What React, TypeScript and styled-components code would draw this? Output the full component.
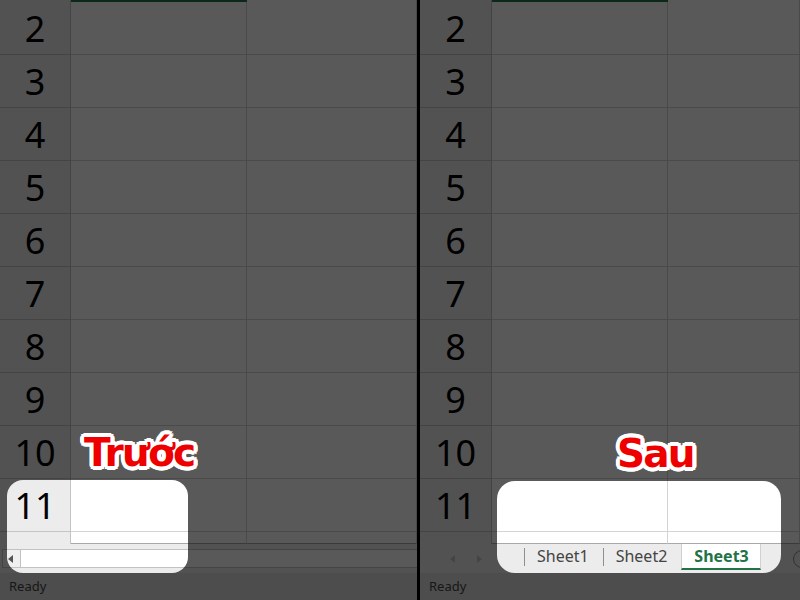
import React from 'react';
import styled, { createGlobalStyle } from 'styled-components';

const GlobalStyle = createGlobalStyle`
  html, body {
    margin: 0;
    padding: 0;
    background: #000;
  }
  body {
    font-family: "Noto Sans", "Open Sans", sans-serif;
  }
`;

const outline = (r: number) => {
  const parts: string[] = [];
  for (let a = 0; a < 360; a += 20) {
    const x = (Math.cos((a * Math.PI) / 180) * r).toFixed(2);
    const y = (Math.sin((a * Math.PI) / 180) * r).toFixed(2);
    parts.push(`${x}px ${y}px 0 #fff`);
  }
  return parts.join(', ');
};

const LABEL_SHADOW = `${outline(2)}, ${outline(4)}`;

const Screen = styled.div`
  display: flex;
  width: 800px;
  height: 600px;
  overflow: hidden;
  background: #000;
`;

const Panel = styled.div<{ $width: number }>`
  position: relative;
  flex: none;
  width: ${(p) => p.$width}px;
  display: flex;
  flex-direction: column;
  overflow: hidden;
  background: #fff;
`;

const Divider = styled.div`
  flex: none;
  width: 3px;
  background: #000;
`;

const Grid = styled.div`
  flex: none;
  height: 544px;
  display: flex;
  flex-direction: column;
  overflow: hidden;
`;

const Row = styled.div<{ $h: number }>`
  display: flex;
  flex: none;
  height: ${(p) => p.$h}px;
`;

const RowHead = styled.div<{ $w: number; $line?: boolean }>`
  flex: none;
  box-sizing: border-box;
  width: ${(p) => p.$w}px;
  background: #ececec;
  border-right: 1px solid #c4c4c4;
  border-bottom: ${(p) => (p.$line ? '1px solid #c4c4c4' : 'none')};
  color: #000;
  font-size: 36px;
  line-height: 52px;
  padding-top: 1px;
  text-align: center;
`;

const Cell = styled.div<{ $w?: number; $bottom?: string; $fill?: string }>`
  position: relative;
  box-sizing: border-box;
  flex: ${(p) => (p.$w ? 'none' : '1')};
  width: ${(p) => (p.$w ? `${p.$w}px` : 'auto')};
  background: ${(p) => p.$fill || '#fff'};
  border-right: 1px solid #d4d4d4;
  border-bottom: ${(p) => (p.$bottom ? `1px solid ${p.$bottom}` : 'none')};
`;

const FillHandle = styled.div`
  position: absolute;
  right: -3px;
  top: 0;
  width: 5px;
  height: 4px;
  background: #217346;
`;

const BottomBar = styled.div`
  flex: none;
  height: 29px;
  display: flex;
  align-items: center;
  background: #ececec;
`;

const Scrollbar = styled.div`
  flex: 1;
  display: flex;
  height: 19px;
  margin-left: 2px;
  box-sizing: border-box;
  border: 1px solid #c2c2c2;
  border-right: none;
  background: #fff;
`;

const ScrollArrow = styled.div`
  flex: none;
  width: 18px;
  display: flex;
  align-items: center;
  justify-content: flex-start;
  padding-left: 5px;
  box-sizing: border-box;
  border-right: 1px solid #c2c2c2;
  background: #f0f0f0;
`;

const TabNav = styled.div`
  flex: none;
  width: 104px;
  display: flex;
  align-items: center;
  gap: 22px;
  padding-left: 30px;
  box-sizing: border-box;
`;

const Tab = styled.div<{ $active?: boolean }>`
  position: relative;
  align-self: flex-start;
  flex: none;
  height: 26px;
  box-sizing: border-box;
  padding: 0 ${(p) => (p.$active ? 11 : 13)}px 0 12px;
  font-size: 16px;
  line-height: 25px;
  color: ${(p) => (p.$active ? '#217346' : '#444')};
  font-weight: ${(p) => (p.$active ? 700 : 400)};
  background: ${(p) => (p.$active ? '#fff' : 'transparent')};
  border-bottom: 2px solid ${(p) => (p.$active ? '#217346' : 'transparent')};
  border-left: 1px solid ${(p) => (p.$active ? '#d0d0d0' : 'transparent')};
  border-right: 1px solid ${(p) => (p.$active ? '#d0d0d0' : 'transparent')};

  &::before {
    content: '';
    display: ${(p) => (p.$active ? 'none' : 'block')};
    position: absolute;
    left: -1px;
    top: 4px;
    bottom: 2px;
    width: 1px;
    background: #8e8e8e;
  }
`;

const AddSheet = styled.div`
  flex: none;
  width: 16px;
  height: 16px;
  margin-left: auto;
  margin-right: -11px;
  border: 1.5px solid #8c8c8c;
  border-radius: 50%;
`;

const StatusBar = styled.div`
  flex: 1;
  background: #dcdcdc;
  color: #444;
  font-size: 13px;
  line-height: 26px;
  padding-left: 9px;
`;

const Spotlight = styled.div<{ $x: number; $y: number; $w: number; $h: number; $r: number }>`
  position: absolute;
  left: ${(p) => p.$x}px;
  top: ${(p) => p.$y}px;
  width: ${(p) => p.$w}px;
  height: ${(p) => p.$h}px;
  border-radius: ${(p) => p.$r}px;
  box-shadow: 0 0 0 1200px rgba(0, 0, 0, 0.65);
  pointer-events: none;
  z-index: 1;
`;

const Label = styled.div<{ $x: number; $y: number }>`
  position: absolute;
  left: ${(p) => p.$x}px;
  top: ${(p) => p.$y}px;
  z-index: 2;
  font-family: "DejaVu Sans", "Liberation Sans", sans-serif;
  font-weight: 700;
  font-size: 39px;
  line-height: 44px;
  letter-spacing: -1.8px;
  color: #ee0000;
  text-shadow: ${LABEL_SHADOW};
  white-space: nowrap;
`;

const Tri = ({ dir, color }: { dir: 'left' | 'right'; color: string }) => (
  <svg width="5" height="8" viewBox="0 0 5 8">
    <path d={dir === 'left' ? 'M5 0 L0 4 L5 8 Z' : 'M0 0 L5 4 L0 8 Z'} fill={color} />
  </svg>
);

const rows = [2, 3, 4, 5, 6, 7, 8, 9, 10, 11];

const Sheet = ({ headW }: { headW: number }) => (
  <Grid>
    <Row $h={2}>
      <RowHead $w={headW} />
      <Cell $w={176} $fill="#217346">
        <FillHandle />
      </Cell>
      <Cell />
    </Row>
    {rows.map((n) => (
      <Row key={n} $h={53}>
        <RowHead $w={headW} $line>
          {n}
        </RowHead>
        <Cell $w={176} $bottom="#d4d4d4" />
        <Cell $bottom="#d4d4d4" />
      </Row>
    ))}
    <Row $h={12}>
      <RowHead $w={headW} />
      <Cell $w={176} $bottom="#a8a8a8" />
      <Cell $bottom="#a8a8a8" />
    </Row>
  </Grid>
);

export default function App() {
  return (
    <>
      <GlobalStyle />
      <Screen>
        <Panel $width={417}>
          <Sheet headW={71} />
          <BottomBar>
            <Scrollbar>
              <ScrollArrow>
                <Tri dir="left" color="#555" />
              </ScrollArrow>
            </Scrollbar>
          </BottomBar>
          <StatusBar>Ready</StatusBar>
          <Spotlight $x={7} $y={480} $w={181} $h={93} $r={16} />
          <Label $x={84} $y={431}>Trước</Label>
        </Panel>
        <Divider />
        <Panel $width={380}>
          <Sheet headW={72} />
          <BottomBar>
            <TabNav>
              <Tri dir="left" color="#c4c4c4" />
              <Tri dir="right" color="#c4c4c4" />
            </TabNav>
            <Tab>Sheet1</Tab>
            <Tab>Sheet2</Tab>
            <Tab $active>Sheet3</Tab>
            <AddSheet />
          </BottomBar>
          <StatusBar>Ready</StatusBar>
          <Spotlight $x={77} $y={481} $w={284} $h={92} $r={18} />
          <Label $x={197} $y={432}>Sau</Label>
        </Panel>
      </Screen>
    </>
  );
}
